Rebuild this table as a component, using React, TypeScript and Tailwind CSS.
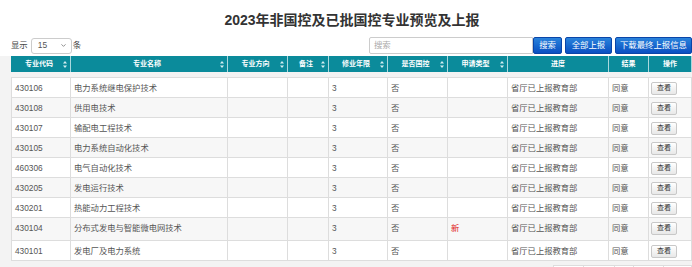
import React from 'react';
import { ChevronDown } from 'lucide-react';

const grid = 'grid grid-cols-[59px_157px_60px_41px_59px_60px_60px_101px_40px_43px]';

const headers = [
  { name: '专业代码', sort: true },
  { name: '专业名称', sort: true },
  { name: '专业方向', sort: true },
  { name: '备注', sort: true },
  { name: '修业年限', sort: true },
  { name: '是否国控', sort: true },
  { name: '申请类型', sort: true },
  { name: '进度', sort: false },
  { name: '结果', sort: false },
  { name: '操作', sort: false },
];

const rows = [
  { code: '430106', name: '电力系统继电保护技术' },
  { code: '430108', name: '供用电技术' },
  { code: '430107', name: '输配电工程技术' },
  { code: '430105', name: '电力系统自动化技术' },
  { code: '460306', name: '电气自动化技术' },
  { code: '430205', name: '发电运行技术' },
  { code: '430201', name: '热能动力工程技术' },
  { code: '430104', name: '分布式发电与智能微电网技术', type: '新' },
  { code: '430101', name: '发电厂及电力系统' },
];

// widths of the pager boxes peeking in at the bottom edge
const pager = ['w-[31px]', 'w-[32px]', 'w-[20px]', 'w-[31px]', 'w-[29px]'];

const SortIcon = () => (
  <svg width="4" height="7" viewBox="0 0 4 7" className="shrink-0">
    <path d="M2 0 L4 2.6 L0 2.6 Z" fill="#d6eef1" />
    <path d="M0 4.4 L4 4.4 L2 7 Z" fill="#d6eef1" />
  </svg>
);

const Cell = ({ children, className = '' }: { children?: React.ReactNode; className?: string }) => (
  <div className={`border-r border-[#dddddd] pl-[3px] pt-[4px] leading-[12px] whitespace-nowrap overflow-hidden ${className}`}>
    {children}
  </div>
);

export default function App() {
  return (
    <div className="w-[692px] h-[267px] overflow-hidden bg-white font-['Liberation_Sans','Noto_Sans_CJK_SC',sans-serif] text-[#555]">
      <h1 className="pt-[12px] pl-3 text-center text-[14px] leading-[16px] font-bold text-[#333]">
        2023年非国控及已批国控专业预览及上报
      </h1>

      <div className="mt-[9px] flex items-center h-[17px] text-[8.4px]">
        <div className="flex items-center pl-[11px] text-[#444]">
          <span>显示</span>
          <div className="ml-[3px] mr-[1px] w-[41px] h-[16px] flex items-center justify-between pl-[6px] pr-[4px] bg-white border border-[#cccccc] rounded-[3px]">
            <span className="text-[#555]">15</span>
            <ChevronDown size={7} strokeWidth={2.5} className="text-[#666]" />
          </div>
          <span>条</span>
        </div>
        <div className="ml-auto flex items-center">
          <div className="w-[164px] h-[17px] flex items-center pl-[4px] bg-white border border-[#cccccc] rounded-l-[2px] text-[#aaa]">
            搜索
          </div>
          <button className="w-[29px] h-[17px] bg-gradient-to-b from-[#2a82db] to-[#0b4fc2] border border-[#0a45a8] rounded-[2px] text-white">
            搜索
          </button>
          <button className="ml-[3px] w-[47px] h-[17px] bg-gradient-to-b from-[#2a82db] to-[#0b4fc2] border border-[#0a45a8] rounded-[2px] text-white">
            全部上报
          </button>
          <button className="ml-[3px] w-[77px] h-[17px] bg-gradient-to-b from-[#2a82db] to-[#0b4fc2] border border-[#0a45a8] rounded-[2px] text-white">
            下载最终上报信息
          </button>
        </div>
      </div>

      <div className="mt-[2px] bg-[#f3f3f3] pl-[11px] pb-[10px]">
        <div className={`${grid} h-[16px] bg-[#0b8b9b] border-l border-[#0b8b9b] text-white text-[7px] font-bold`}>
          {headers.map((h) => (
            <div key={h.name} className="flex items-center border-r border-[#a9d8de] pl-[3px] pr-[3px]">
              <span className="flex-1 text-center whitespace-nowrap">{h.name}</span>
              {h.sort && <SortIcon />}
            </div>
          ))}
        </div>

        <div className="mt-[5px] bg-white border-l border-t border-[#dddddd] text-[8.3px]">
          {rows.map((r, i) => (
            <div
              key={r.code}
              className={`${grid} border-b border-[#dddddd] ${r.type ? 'h-[23px]' : 'h-[20px]'} ${i % 2 === 1 ? 'bg-[#f7f7f7]' : 'bg-white'}`}
            >
              <Cell>{r.code}</Cell>
              <Cell>{r.name}</Cell>
              <Cell />
              <Cell />
              <Cell>3</Cell>
              <Cell>否</Cell>
              <Cell className="text-[#e02020]">{r.type}</Cell>
              <Cell>省厅已上报教育部</Cell>
              <Cell>同意</Cell>
              <div className="border-r border-[#dddddd] pl-[2px] pt-[4px]">
                <button className="w-[26px] h-[13px] flex items-center justify-center bg-gradient-to-b from-white to-[#e8e8e8] border border-[#c8c8c8] rounded-[2px] text-[7px] text-[#333]">
                  查看
                </button>
              </div>
            </div>
          ))}
        </div>

        <div className="mt-[4px] flex justify-end">
          {pager.map((w, i) => (
            <div key={i} className={`h-[18px] bg-white border border-[#dddddd] -ml-px ${w}`} />
          ))}
        </div>
      </div>
    </div>
  );
}
